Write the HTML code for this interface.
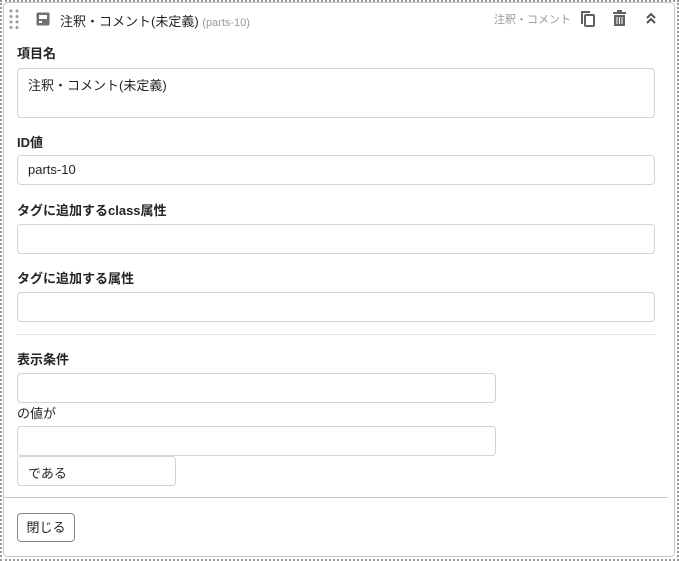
<!DOCTYPE html>
<html><head><meta charset="utf-8"><style>
*{box-sizing:border-box;margin:0;padding:0}
body{width:679px;height:561px;background:#fff;position:relative;overflow:hidden;font-family:"Liberation Sans","Noto Sans CJK JP",sans-serif;font-size:13px;color:#212529}
.outer{position:absolute;left:0;top:0;width:679px;height:561px;border:2px dotted #999}
.card{position:absolute;left:3px;top:2px;width:672px;height:555px;border:1px solid #c8c8c8;border-radius:5px;background:#fff}
.a{position:absolute}
.lbl{position:absolute;left:17px;font-weight:bold;font-size:13px}
.in{position:absolute;left:17px;width:638px;height:30px;border:1px solid #ced4da;border-radius:4px;padding:6px 10px;font-size:13px}
</style></head><body>
<div class="outer"></div>
<div class="card"></div>
<svg class="a" style="left:9px;top:9px" width="10" height="20"><g fill="#999"><circle cx="2" cy="2" r="1.5"/><circle cx="8" cy="2" r="1.5"/><circle cx="2" cy="7.5" r="1.5"/><circle cx="8" cy="7.5" r="1.5"/><circle cx="2" cy="13" r="1.5"/><circle cx="8" cy="13" r="1.5"/><circle cx="2" cy="18.5" r="1.5"/><circle cx="8" cy="18.5" r="1.5"/></g></svg>
<svg class="a" style="left:36px;top:12px" width="14" height="14"><rect x="0.5" y="0.5" width="13" height="13" rx="1.5" fill="#6b7075"/><rect x="3" y="3" width="8" height="4" fill="#fff"/><rect x="3" y="9" width="3" height="2" fill="#fff"/></svg>
<div class="a" style="left:60px;top:11px;font-size:13px">注釈・コメント(未定義) <span style="font-size:11px;color:#999">(parts-10)</span></div>
<div class="a" style="left:494px;top:11px;font-size:11px;color:#999">注釈・コメント</div>
<svg class="a" style="left:580px;top:10px" width="16" height="18"><path d="M2 3v11" stroke="#5f6368" stroke-width="2" fill="none"/><path d="M1 2h9" stroke="#5f6368" stroke-width="2"/><rect x="5" y="5" width="9" height="11" rx="1" stroke="#5f6368" stroke-width="2" fill="none"/></svg>
<svg class="a" style="left:612px;top:10px" width="16" height="18"><rect x="1" y="2" width="13" height="2" fill="#5f6368"/><rect x="5" y="0" width="5" height="2" fill="#5f6368"/><path d="M2 5h11v11H2z" fill="#5f6368"/><path d="M5 7v7M7.5 7v7M10 7v7" stroke="#fff" stroke-width="1"/></svg>
<svg class="a" style="left:645px;top:12px" width="12" height="14"><path d="M2 6l4-4 4 4M2 11l4-4 4 4" stroke="#555" stroke-width="2" fill="none"/></svg>
<div class="lbl" style="top:43px">項目名</div>
<div class="in" style="top:68px;height:50px">注釈・コメント(未定義)</div>
<div class="lbl" style="top:132px">ID値</div>
<div class="in" style="top:155px">parts-10</div>
<div class="lbl" style="top:200px">タグに追加するclass属性</div>
<div class="in" style="top:224px"></div>
<div class="lbl" style="top:268px">タグに追加する属性</div>
<div class="in" style="top:292px"></div>
<div class="a" style="left:17px;top:334px;width:638px;border-top:1px dotted #ccc"></div>
<div class="lbl" style="top:349px">表示条件</div>
<div class="in" style="top:373px;width:479px"></div>
<div class="a" style="left:17px;top:403px">の値が</div>
<div class="in" style="top:426px;width:479px"></div>
<div class="in" style="top:456px;width:159px">である</div>
<div class="a" style="left:3px;top:497px;width:665px;border-top:1px solid #c8c8c8"></div>
<div class="a" style="left:17px;top:513px;width:58px;height:29px;border:1px solid #888;border-radius:4px;text-align:center;line-height:27px">閉じる</div>
</body></html>
